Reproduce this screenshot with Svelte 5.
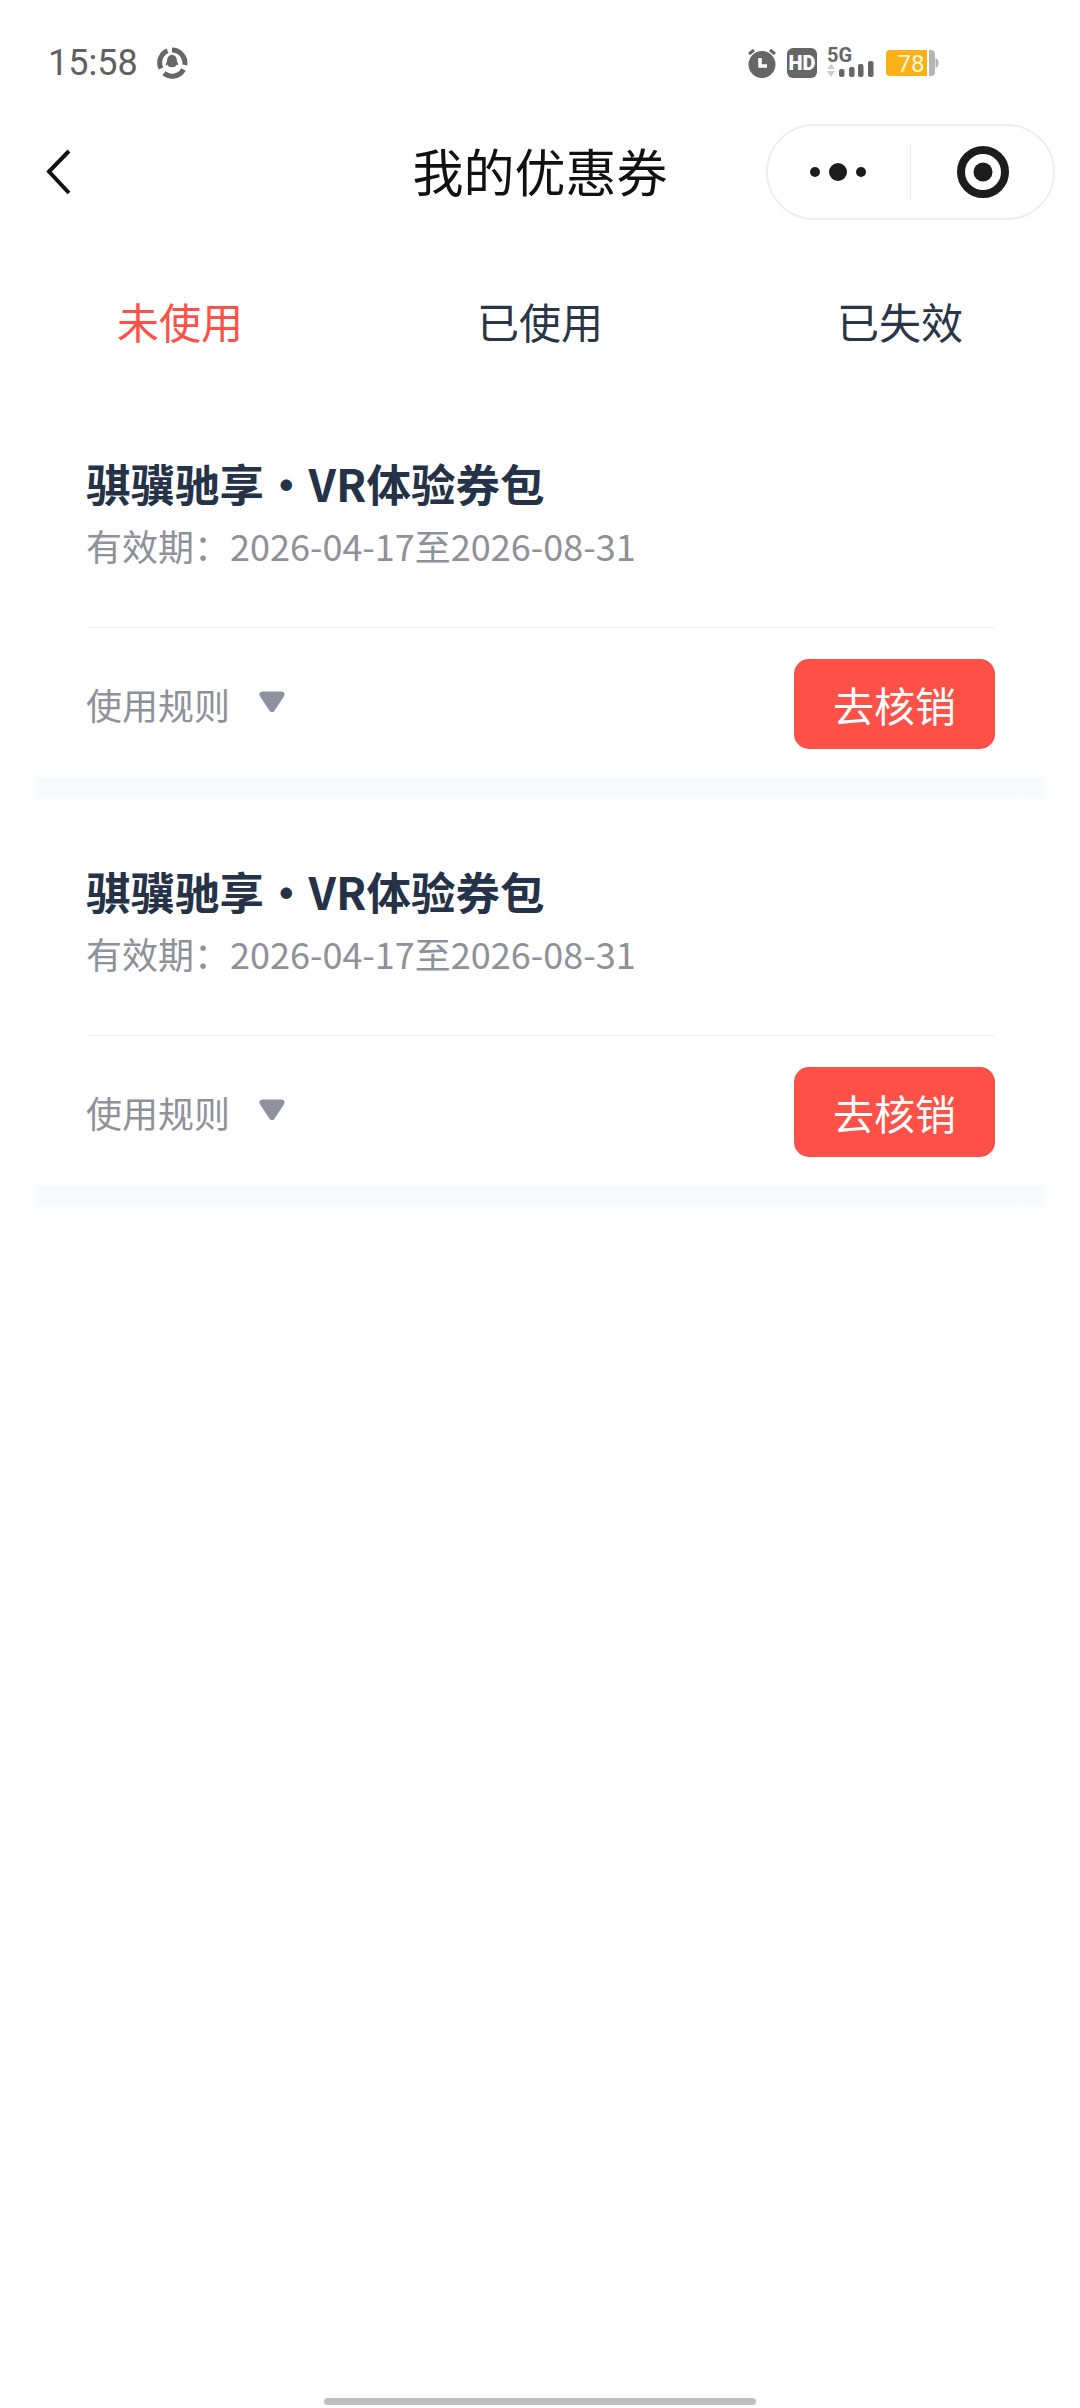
<script>
  const tabs = ['未使用', '已使用', '已失效'];
  const coupons = [
    { title: '骐骥驰享·VR体验券包', date: '有效期\uFF1A2026-04-17至2026-08-31' },
    { title: '骐骥驰享·VR体验券包', date: '有效期\uFF1A2026-04-17至2026-08-31' }
  ];
</script>

<div class="page">
  <div class="status">
    <div class="status-left">
      <span class="time">15:58</span>
      <svg class="qq" width="32" height="32" viewBox="0 0 32 32">
        <g fill="none" stroke="#666" stroke-width="5">
          <path d="M5 21.500A13 13 0 0 1 11.500 3.800" />
          <path d="M16 3A13 13 0 0 1 28.800 18" />
          <path d="M27.500 22.500A13 13 0 0 1 8 26.300" />
        </g>
        <path d="M16 8c3.400 0 4.800 2.600 4.800 5.400 0 1 1.700 2.800 1.500 4.400-.2 1-1.300.6-1.900-.2-.2 1-.5 1.500-1 2-2 .8-4.800.8-6.800 0-.5-.5-.8-1-1-2-.6.8-1.700 1.200-1.900.2-.2-1.600 1.500-3.400 1.500-4.400C11.200 10.600 12.600 8 16 8z" fill="#666" />
      </svg>
    </div>
    <div class="status-right">
      <svg width="30" height="30" viewBox="0 0 30 30">
        <circle cx="15" cy="16.500" r="13.500" fill="#666" />
        <path d="M2 6l5-4M28 6l-5-4" stroke="#666" stroke-width="3" fill="none" />
        <path d="M13 10v8h7" stroke="#fff" stroke-width="3.500" fill="none" />
      </svg>
      <svg width="30" height="30" viewBox="0 0 30 30">
        <rect width="30" height="30" rx="6" fill="#666" />
        <text class="hd" x="15" y="22" text-anchor="middle">HD</text>
      </svg>
      <svg class="net" width="48" height="38" viewBox="0 -6 48 38">
        <text class="five" x="0" y="15">5G</text>
        <path d="M4 17l4 5H0zM0 24h8l-4 6z" fill="#ccc" />
        <g fill="#666">
          <rect x="12" y="22" width="5.500" height="8" rx="2" />
          <rect x="22" y="20" width="5.500" height="10" rx="2" />
          <rect x="31" y="17" width="5.500" height="13" rx="2" />
          <rect x="41" y="14" width="5.500" height="16" rx="2" />
        </g>
      </svg>
      <svg width="54" height="28" viewBox="0 0 54 28">
        <path d="M44 1h2a4 4 0 0 1 4 4v18a4 4 0 0 1-4 4h-2z" fill="#b5b5b5" />
        <path d="M50.500 9c2 .5 3 2.500 3 5s-1 4.500-3 5z" fill="#b5b5b5" />
        <path d="M5 1h37v26H5a4 4 0 0 1-4-4V5a4 4 0 0 1 4-4z" fill="#fbb116" />
        <text class="batt" x="26" y="22.500" text-anchor="middle">78</text>
      </svg>
    </div>
  </div>

  <div class="nav">
    <div class="nav-left">
      <svg width="28" height="48" viewBox="0 0 28 48">
        <path d="M24 3L4 23.500 24 45" fill="none" stroke="#111" stroke-width="4" />
      </svg>
    </div>
    <div class="nav-title">我的优惠券</div>
    <div class="capsule">
      <div class="cap-cell">
        <svg width="64" height="24" viewBox="0 0 64 24">
          <circle cx="9" cy="12" r="5" fill="#1c1c1c" />
          <circle cx="32" cy="12" r="9" fill="#1c1c1c" />
          <circle cx="55" cy="12" r="5" fill="#1c1c1c" />
        </svg>
      </div>
      <div class="cap-line"></div>
      <div class="cap-cell">
        <svg width="54" height="54" viewBox="0 0 54 54">
          <circle cx="27" cy="27" r="22" fill="none" stroke="#1c1c1c" stroke-width="8" />
          <circle cx="27" cy="27" r="9.500" fill="#1c1c1c" />
        </svg>
      </div>
    </div>
  </div>

  <div class="tabs">
    {#each tabs as tab, i}
      <div class="tab" class:active={i === 0}>{tab}</div>
    {/each}
  </div>

  <div class="list">
    {#each coupons as c}
      <div class="card">
        <div class="title">{c.title}</div>
        <div class="date">{c.date}</div>
        <div class="foot">
          <div class="rule">
            <span>使用规则</span>
            <svg width="26" height="22" viewBox="0 0 26 22">
              <path d="M3.500 3.500h19L13 18z" fill="#8f919c" stroke="#8f919c" stroke-width="6" stroke-linejoin="round" />
            </svg>
          </div>
          <div class="btn">去核销</div>
        </div>
      </div>
    {/each}
  </div>

  <div class="home"></div>
</div>

<style>
  :global(body) {
    margin: 0;
    background: #fff;
  }
  .page {
    width: 1080px;
    height: 2408px;
    display: flex;
    flex-direction: column;
    background: #fff;
    font-family: "Noto Sans CJK SC", "Noto Sans", sans-serif;
    overflow: hidden;
  }
  .status {
    height: 124px;
    box-sizing: border-box;
    padding: 2px 141px 0 48px;
    display: flex;
    align-items: center;
    justify-content: space-between;
  }
  .status-left {
    display: flex;
    align-items: center;
    gap: 18px;
  }
  .time {
    font-family: Roboto, sans-serif;
    font-size: 36px;
    font-weight: 400;
    color: #606060;
  }
  .status-right {
    display: flex;
    align-items: center;
    gap: 10px;
  }
  .status-right svg {
    display: block;
  }
  .status-right .net {
    margin-top: -6px;
  }
  .hd {
    font-family: Roboto, sans-serif;
    font-size: 20px;
    font-weight: 900;
    fill: #fff;
  }
  .five {
    font-family: Roboto, sans-serif;
    font-size: 20px;
    font-weight: 700;
    fill: #666;
  }
  .batt {
    font-family: Roboto, sans-serif;
    font-size: 24px;
    fill: #fff8d8;
  }
  .nav {
    height: 96px;
    display: grid;
    grid-template-columns: 1fr auto 1fr;
    align-items: center;
    padding-right: 25px;
    padding-left: 25px;
  }
  .nav-left {
    padding-left: 20px;
    display: flex;
  }
  .nav-title {
    font-size: 51px;
    line-height: 60px;
    padding-bottom: 4px;
    color: #111;
  }
  .capsule {
    justify-self: end;
    width: 289px;
    height: 96px;
    box-sizing: border-box;
    border: 2px solid #eeeeee;
    border-radius: 48px;
    display: flex;
    align-items: center;
  }
  .cap-cell {
    flex: 1;
    display: flex;
    justify-content: center;
    align-items: center;
  }
  .cap-cell:first-child svg {
    margin-left: -3px;
  }
  .cap-cell:last-child svg {
    margin-left: 2px;
  }
  .cap-line {
    width: 1px;
    height: 56px;
    background: #ececec;
  }
  .tabs {
    height: 208px;
    box-sizing: border-box;
    padding-bottom: 6px;
    display: grid;
    grid-template-columns: repeat(3, 360px);
    align-items: center;
  }
  .tab {
    text-align: center;
    font-size: 42px;
    line-height: 60px;
    color: #2a3547;
  }
  .tab.active {
    color: #ff5148;
  }
  .list {
    display: flex;
    flex-direction: column;
    gap: 59px;
    padding: 0 29px 0 30px;
  }
  .card {
    position: relative;
    height: 349px;
    box-sizing: border-box;
    padding: 25px 56px 0;
    background: #fff;
  }
  .card::after {
    content: "";
    position: absolute;
    left: 0;
    right: 0;
    top: 100%;
    height: 26px;
    background: linear-gradient(#f8f9fc 0%, #f9fafc 70%, #fefeff 100%);
    -webkit-mask-image: linear-gradient(90deg, transparent 0, #000 10px, #000 calc(100% - 10px), transparent 100%);
    mask-image: linear-gradient(90deg, transparent 0, #000 10px, #000 calc(100% - 10px), transparent 100%);
  }
  .title {
    font-size: 44.500px;
    line-height: 60px;
    font-weight: 700;
    color: #253247;
  }
  .date {
    margin-top: 7px;
    font-size: 36px;
    line-height: 50px;
    color: #8f9199;
  }
  .foot {
    margin-top: 57px;
    border-top: 1px solid #f1f1f3;
    padding-top: 31px;
    display: flex;
    align-items: center;
    justify-content: space-between;
  }
  .rule {
    display: flex;
    align-items: center;
    gap: 29px;
    font-size: 36px;
    line-height: 50px;
    color: #8f9199;
  }
  .rule svg {
    margin-top: -4px;
  }
  .btn {
    width: 201px;
    height: 90px;
    border-radius: 15px;
    background: #ff5148;
    color: #fff;
    font-size: 41px;
    display: flex;
    align-items: center;
    justify-content: center;
  }
  .home {
    width: 432px;
    height: 7px;
    border-radius: 4px;
    background: #bfbfbf;
    margin: auto 0 3px 324px;
  }
</style>
